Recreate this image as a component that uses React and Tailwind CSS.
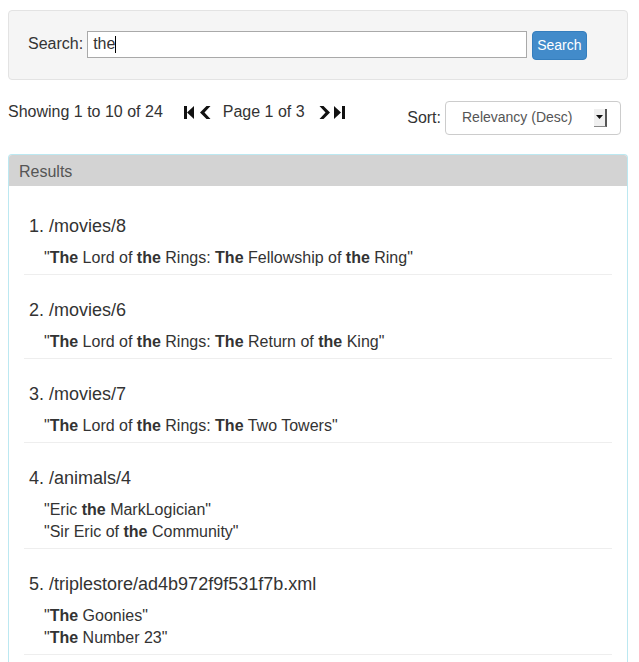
const results = [
  {
    uri: '/movies/8',
    snippets: [
      [['The', 1], [' Lord of ', 0], ['the', 1], [' Rings: ', 0], ['The', 1], [' Fellowship of ', 0], ['the', 1], [' Ring', 0]],
    ],
  },
  {
    uri: '/movies/6',
    snippets: [
      [['The', 1], [' Lord of ', 0], ['the', 1], [' Rings: ', 0], ['The', 1], [' Return of ', 0], ['the', 1], [' King', 0]],
    ],
  },
  {
    uri: '/movies/7',
    snippets: [[['The', 1], [' Lord of ', 0], ['the', 1], [' Rings: ', 0], ['The', 1], [' Two Towers', 0]]],
  },
  {
    uri: '/animals/4',
    snippets: [
      [['Eric ', 0], ['the', 1], [' MarkLogician', 0]],
      [['Sir Eric of ', 0], ['the', 1], [' Community', 0]],
    ],
  },
  {
    uri: '/triplestore/ad4b972f9f531f7b.xml',
    snippets: [
      [['The', 1], [' Goonies', 0]],
      [['The', 1], [' Number 23', 0]],
    ],
  },
]

const StepBack = () => (
  <svg width="11" height="13" viewBox="0 0 11 13" fill="#111">
    <rect x="0" y="0" width="3" height="13" />
    <polygon points="3,6.5 10,0 10,13" />
  </svg>
)

const StepFwd = () => (
  <svg width="11" height="13" viewBox="0 0 11 13" fill="#111">
    <polygon points="0,0 7,6.5 0,13" />
    <rect x="8" y="0" width="3" height="13" />
  </svg>
)

const ChevLeft = () => (
  <svg width="12" height="13" viewBox="0 0 12 13" fill="#111">
    <polygon points="0,6.5 6.5,0 10.5,0 4.5,6.5 10.5,13 6.5,13" />
  </svg>
)

const ChevRight = () => (
  <svg width="12" height="13" viewBox="0 0 12 13" fill="#111">
    <polygon points="1.5,0 5.5,0 12,6.5 5.5,13 1.5,13 7.5,6.5" />
  </svg>
)

const Snippet = ({ parts }) => (
  <div className="h-[22px] leading-[22px]">
    "
    {parts.map(([t, b], i) =>
      b ? (
        <b key={i} className="font-bold">
          {t}
        </b>
      ) : (
        <span key={i}>{t}</span>
      )
    )}
    "
  </div>
)

export default function App() {
  return (
    <div
      className="w-[639px] h-[662px] overflow-hidden bg-white pl-2 pr-[11px] pt-[10px] text-[16px] text-[#333]"
      style={{ fontFamily: '"Liberation Sans", Arial, sans-serif' }}
    >
      {/* Search */}
      <div className="h-[70px] rounded-[4px] border border-[#e3e3e3] bg-[#f5f5f5] flex items-center pl-[19px]">
        <span className="mr-[4px] mt-[-2px]">Search:</span>
        <div className="w-[440px] h-[27px] border border-[#a9a9a9] bg-white flex items-center pl-[5px] mt-[-2px]">
          the<span className="inline-block w-px h-[17px] bg-black" />
        </div>
        <button className="ml-[5px] h-[29px] px-[4px] rounded-[4px] border border-[#357ebd] bg-[#428bca] text-white text-[14px]">
          Search
        </button>
      </div>

      {/* Pager + sort */}
      <div className="flex mt-[21px] h-[34px]">
        <div className="flex items-center h-[22px]">
          <span>Showing 1 to 10 of 24</span>
          <span className="ml-[21px] flex items-center gap-[5px]">
            <StepBack />
            <ChevLeft />
          </span>
          <span className="ml-[11px]">Page 1 of 3</span>
          <span className="ml-[13px] flex items-center gap-[4px]">
            <ChevRight />
            <StepFwd />
          </span>
        </div>
        <div className="ml-auto mr-[7px] flex items-center">
          <span className="mr-[4px]">Sort:</span>
          <div className="w-[176px] h-[34px] rounded-[4px] border border-[#ccc] bg-white flex items-center pl-[16px] pr-[13px] text-[14px] text-[#555] mt-[-1px]">
            <span>Relevancy (Desc)</span>
            <span className="ml-auto w-[13px] h-[18px] bg-[#f0f0f0] border-r-2 border-b border-r-[#555] border-b-[#888] flex items-center justify-center">
              <svg width="7" height="4" viewBox="0 0 7 4">
                <polygon points="0,0 7,0 3.5,4" fill="#111" />
              </svg>
            </span>
          </div>
        </div>
      </div>

      {/* Results panel */}
      <div className="mt-[19px] rounded-t-[4px] border border-[#bce8f1] border-b-0 h-[520px]">
        <div className="h-[31px] bg-[#d3d3d3] rounded-t-[3px] flex items-center pl-[10px] pt-[2px] text-[#555]">
          Results
        </div>
        <div className="px-[15px] pt-[5px]">
          {results.map((r, i) => (
            <div key={r.uri} className="border-b border-[#eee] pt-[22px] pb-[5px]">
              <div className="h-[26px] leading-[26px] text-[18px] pl-[5px]">
                {i + 1}. {r.uri}
              </div>
              <div className="mt-[8px] pl-[20px]">
                {r.snippets.map((s, j) => (
                  <Snippet key={j} parts={s} />
                ))}
              </div>
            </div>
          ))}
        </div>
      </div>
    </div>
  )
}
